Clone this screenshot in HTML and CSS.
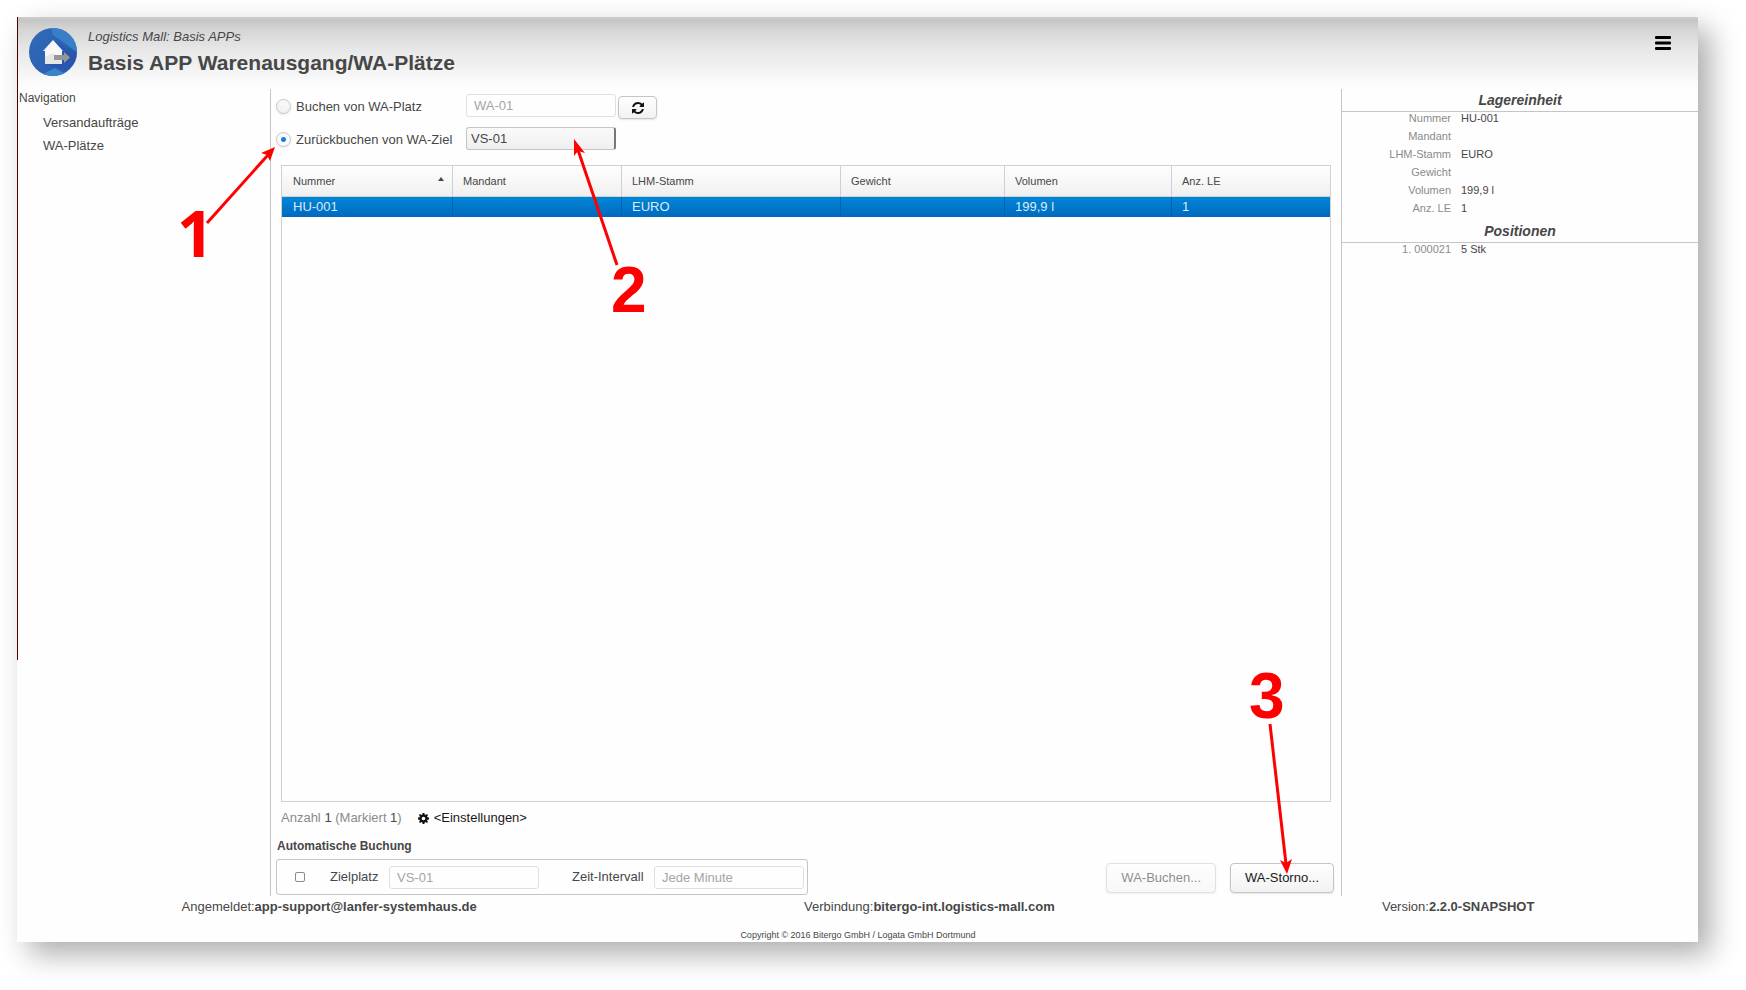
FILE: index.html
```html
<!DOCTYPE html>
<html lang="de">
<head>
<meta charset="utf-8">
<title>Basis APP Warenausgang/WA-Plätze</title>
<link rel="stylesheet" href="styles.css">
</head>
<body>
<div class="window">
  <header class="header">
    <svg class="logo" viewBox="0 0 48 48" aria-hidden="true">
      <defs>
        <clipPath id="disc"><circle cx="24" cy="24" r="24"/></clipPath>
        <linearGradient id="sky" x1="0" y1="0" x2="1" y2="1"><stop offset="0" stop-color="#2f6cb8"/><stop offset="1" stop-color="#2a58b0"/></linearGradient>
      </defs>
      <g clip-path="url(#disc)">
        <rect width="48" height="48" fill="url(#sky)"/>
        <path d="M22 0H48V24L24 7Z" fill="#397fc8"/>
        <path d="M24 12L48 26V34L36 42L16 36Z" fill="#264fa8" opacity=".5"/>
        <path d="M10 48L26 40L40 48Z" fill="#3a82ca"/>
      </g>
      <path d="M24 12L34 23H33V36H16V23H14Z" fill="#f8f8f8"/>
      <path d="M16 29L24 25L33 33V36H16Z" fill="#e6e6e6"/>
      <path d="M25 27H35V24L41 29.500L35 35V32H25Z" fill="#969696"/>
    </svg>
    <div class="titles">
      <p class="suite">Logistics Mall: Basis APPs</p>
      <h1 class="title">Basis APP Warenausgang/WA-Plätze</h1>
    </div>
    <button class="menu" type="button" aria-label="Menü">
      <svg viewBox="0 0 16 14" width="16" height="14"><g fill="#000"><rect width="16" height="3" rx="1"/><rect y="5.500" width="16" height="3" rx="1"/><rect y="11" width="16" height="3" rx="1"/></g></svg>
    </button>
  </header>

  <div class="body">
    <nav class="nav">
      <h2 class="nav-title">Navigation</h2>
      <a class="nav-link" href="#auftraege">Versandaufträge</a>
      <a class="nav-link" href="#plaetze">WA-Plätze</a>
    </nav>

    <main class="main">
      <div class="modes">
        <div class="mode">
          <input class="radio" type="radio" name="mode" id="from-place">
          <label class="mode-label" for="from-place">Buchen von WA-Platz</label>
          <input class="field" type="text" value="WA-01" aria-label="WA-Platz" disabled>
          <button class="button refresh" type="button" aria-label="Aktualisieren">
            <svg viewBox="0 0 1536 1536" width="12" height="12"><path fill="#111" d="M1511 928q0 5-1 7-64 268-268 434.500T764 1536q-146 0-282.500-55T238 1324l-129 129q-19 19-45 19t-45-19-19-45V960q0-26 19-45t45-19h448q26 0 45 19t19 45-19 45l-137 137q71 66 161 102t187 36q134 0 250-65t186-179q11-17 53-117 8-23 30-23h192q13 0 22.500 9.500t9.500 22.500zm25-800v448q0 26-19 45t-45 19h-448q-26 0-45-19t-19-45 19-45l138-138Q969 256 768 256q-134 0-250 65T332 500q-11 17-53 117-8 23-30 23H50q-13 0-22.500-9.500T18 608v-7q65-268 270-434.500T768 0q146 0 284 55.500T1297 212l130-129q19-19 45-19t45 19 19 45z"/></svg>
          </button>
        </div>
        <div class="mode">
          <input class="radio" type="radio" name="mode" id="to-target" checked>
          <label class="mode-label" for="to-target">Zurückbuchen von WA-Ziel</label>
          <select class="select" aria-label="WA-Ziel"><option>VS-01</option></select>
        </div>
      </div>

      <div class="grid">
        <table class="table">
          <colgroup><col class="c1"><col class="c2"><col class="c3"><col class="c4"><col class="c5"><col class="c6"></colgroup>
          <thead>
            <tr><th><span class="sorted">Nummer <i class="caret"></i></span></th><th>Mandant</th><th>LHM-Stamm</th><th>Gewicht</th><th>Volumen</th><th>Anz. LE</th></tr>
          </thead>
          <tbody>
            <tr><td>HU-001</td><td></td><td>EURO</td><td></td><td>199,9 l</td><td>1</td></tr>
          </tbody>
        </table>
      </div>

      <div class="summary">
        <span class="count">Anzahl <b>1</b> (Markiert <b>1</b>)</span>
        <button class="settings" type="button">
          <svg viewBox="0 0 12 12" width="11" height="11"><path fill="#111" fill-rule="evenodd" d="M5 0H7L7.300 1.700L8.300 2.100L9.700 1.100L10.900 2.300L9.900 3.700L10.300 4.700L12 5V7L10.300 7.300L9.900 8.300L10.900 9.700L9.700 10.900L8.300 9.900L7.300 10.300L7 12H5L4.700 10.300L3.700 9.900L2.300 10.900L1.100 9.700L2.100 8.300L1.700 7.300L0 7V5L1.700 4.700L2.100 3.700L1.100 2.300L2.300 1.100L3.700 2.100L4.700 1.700ZM6 4A2 2 0 1 0 6 8A2 2 0 1 0 6 4Z"/></svg>
          &lt;Einstellungen&gt;
        </button>
      </div>

      <div class="actions">
        <section class="auto">
          <h2 class="auto-title">Automatische Buchung</h2>
          <div class="auto-box">
            <input class="check" type="checkbox" aria-label="Automatische Buchung">
            <label class="auto-label" for="ziel">Zielplatz</label>
            <input class="field" id="ziel" type="text" value="VS-01" disabled>
            <label class="auto-label interval" for="intervall">Zeit-Intervall</label>
            <input class="field" id="intervall" type="text" value="Jede Minute" disabled>
          </div>
        </section>
        <div class="buttons">
          <button class="button action" type="button" disabled>WA-Buchen...</button>
          <button class="button action" type="button">WA-Storno...</button>
        </div>
      </div>
    </main>

    <aside class="details">
      <h2 class="details-title">Lagereinheit</h2>
      <dl class="facts">
        <dt>Nummer</dt><dd>HU-001</dd>
        <dt>Mandant</dt><dd></dd>
        <dt>LHM-Stamm</dt><dd>EURO</dd>
        <dt>Gewicht</dt><dd></dd>
        <dt>Volumen</dt><dd>199,9 l</dd>
        <dt>Anz. LE</dt><dd>1</dd>
      </dl>
      <h2 class="details-title">Positionen</h2>
      <dl class="facts">
        <dt>1. 000021</dt><dd>5 Stk</dd>
      </dl>
    </aside>
  </div>

  <footer class="footer">
    <div class="status">
      <span>Angemeldet:<b>app-support@lanfer-systemhaus.de</b></span>
      <span>Verbindung:<b>bitergo-int.logistics-mall.com</b></span>
      <span>Version:<b>2.2.0-SNAPSHOT</b></span>
    </div>
    <p class="copyright">Copyright © 2016 Bitergo GmbH / Logata GmbH Dortmund</p>
  </footer>
</div>

<svg class="callouts" width="1746" height="990" viewBox="0 0 1746 990">
  <g stroke="#f00" stroke-width="3" fill="none">
    <path d="M207 223L268 155"/>
    <path d="M617 265L578 150"/>
    <path d="M1270 724L1286 864"/>
  </g>
  <g fill="#f00">
    <path d="M275 147L270 161L267 155L261 153Z"/>
    <path d="M574 139L585 153L578 151L574 156Z"/>
    <path d="M1287 874L1280 860L1286 863L1292 859Z"/>
    <text class="one" x="177" y="257">1</text>
    <text x="611" y="312">2</text>
    <text x="1249" y="718">3</text>
  </g>
</svg>
</body>
</html>
```
FILE: styles.css
```css
* { box-sizing: border-box; }

body {
  margin: 0;
  min-height: 100vh;
  padding: 17px 48px 48px 17px;
  display: flex;
  position: relative;
  background: #fff;
  color: #474747;
  font: 13px/20px "Liberation Sans", Arial, sans-serif;
}

h1, h2, p, dl, dd { margin: 0; }
button, input, select { font: inherit; color: inherit; margin: 0; }

.window {
  flex: 1;
  min-width: 0;
  display: flex;
  flex-direction: column;
  background: linear-gradient(#4a0000, #4a0000) 0 0 / 1px 643px no-repeat, #fefefe;
  padding-left: 1px;
  box-shadow: 12px 12px 28px rgba(0, 0, 0, .33);
}

.header {
  height: 72px;
  display: flex;
  padding: 11px 27px 0 11px;
  background: linear-gradient(#cecece, #c5c5c5 3px, #d4d4d4 12px, #e7e7e7 32px, #fefefe);
}
.logo { width: 48px; height: 48px; }
.titles { flex: 1; padding-left: 11px; }
.suite { font-style: italic; line-height: 18px; }
.title { font-size: 21px; line-height: 34px; }
.menu { align-self: flex-start; margin-top: 8px; padding: 0; border: 0; background: none; line-height: 0; }

.body { flex: 1; display: flex; }

.nav { width: 252px; display: flex; flex-direction: column; align-items: flex-start; }
.nav-title { padding-left: 1px; font-size: 12px; font-weight: 400; line-height: 18px; margin-bottom: 4px; }
.nav-link { margin-left: 25px; color: inherit; text-decoration: none; line-height: 23px; }

.main {
  flex: 1;
  min-width: 0;
  display: flex;
  flex-direction: column;
  border: 1px solid #c5c5c5;
  border-width: 0 1px;
  padding: 5px 7px 1px 5px;
}
.modes { display: grid; gap: 8px; }
.mode { display: flex; align-items: flex-start; }

.radio {
  appearance: none;
  width: 15px;
  height: 15px;
  margin-top: 5px;
  border: 1px solid #c5c5c5;
  border-radius: 50%;
  background: linear-gradient(#fafafa, #f0f0f0);
  box-shadow: 0 1px 2px rgba(0, 0, 0, .08);
}
.radio:checked { background: radial-gradient(circle, #197de1 2px, #fafafa 3px); }
.mode-label { width: 175px; padding-left: 5px; line-height: 25px; }

.field {
  width: 150px;
  height: 23px;
  padding: 0 7px;
  border: 1px solid #e0e0e0;
  border-radius: 3px;
  background: #fefefe;
  color: #a5a5a5;
}
.select {
  appearance: none;
  width: 150px;
  height: 23px;
  padding: 0 4px;
  border: 1px solid #c5c5c5;
  border-right: 2px solid #777;
  border-radius: 3px;
  background: linear-gradient(#fafafa, #efefef);
}
.button {
  border: 1px solid #c5c5c5;
  border-radius: 4px;
  background: linear-gradient(#fefefe, #f2f2f2);
  box-shadow: 0 1px 2px rgba(0, 0, 0, .1);
  color: #191919;
}
.button:disabled { opacity: .5; }
.refresh {
  width: 39px;
  height: 23px;
  margin: 2px 0 0 2px;
  padding: 0;
  display: flex;
  align-items: center;
  justify-content: center;
}

.grid { flex: 1; margin: 13px 3px 0 5px; border: 1px solid #d0d0d0; }
.table { width: 100%; table-layout: fixed; border-collapse: separate; border-spacing: 0; text-align: left; }
.c1 { width: 171px; }
.c2 { width: 169px; }
.c3 { width: 219px; }
.c4 { width: 164px; }
.c5 { width: 167px; }
.table th {
  height: 31px;
  padding: 0 10px;
  border: 1px solid #d0d0d0;
  border-width: 0 1px 1px 0;
  background: linear-gradient(#fefefe, #f0f0f0);
  font-size: 11px;
  font-weight: 400;
}
.table td {
  height: 20px;
  padding: 0 10px;
  border-right: 1px solid #0062ad;
  background: linear-gradient(#0086d8, #0069be);
  color: #d9ebf7;
  line-height: 20px;
}
.table th:last-child, .table td:last-child { border-right: 0; }
.table th:first-child, .table td:first-child { padding-left: 11px; }
.table th:first-child { padding-right: 8px; }
.sorted { display: flex; align-items: center; justify-content: space-between; }
.caret { margin-bottom: 5px; border: 3px solid transparent; border-top: 0; border-bottom: 4px solid #474747; }

.summary { display: flex; gap: 16px; padding: 6px 5px; }
.count { color: #8b8b8b; }
.count b { color: #474747; font-weight: 400; }
.settings { display: flex; align-items: center; gap: 5px; padding: 0; border: 0; background: none; color: #191919; }

.actions { display: flex; justify-content: space-between; align-items: flex-end; }
.auto-title { font-size: 12px; line-height: 20px; margin: 2px 1px 3px; }
.auto-box {
  height: 36px;
  display: flex;
  align-items: center;
  padding: 0 3px 0 18px;
  border: 1px solid #c5c5c5;
  border-radius: 3px;
}
.check {
  appearance: none;
  width: 10px;
  height: 10px;
  margin-right: 25px;
  border: 1px solid #8b8b8b;
  border-radius: 2px;
}
.auto-label { width: 59px; }
.interval { width: 82px; margin-left: 33px; }
.buttons { display: flex; gap: 14px; margin-bottom: 2px; }
.action { height: 30px; padding: 0 14px; }

.details { width: 356px; }
.details-title {
  border-bottom: 1px solid #c5c5c5;
  font-size: 14px;
  font-style: italic;
  line-height: 22px;
  text-align: center;
}
.facts { display: grid; grid-template-columns: 109px 1fr; column-gap: 10px; grid-auto-rows: 18px; font-size: 11px; line-height: 12px; }
.facts dt { color: #8b8b8b; text-align: right; }

.footer { height: 46px; }
.status { display: flex; justify-content: space-around; line-height: 22px; }
.copyright { margin-top: 8px; font-size: 9px; line-height: 18px; text-align: center; }

.callouts { position: absolute; left: 0; top: 0; pointer-events: none; font: bold 64px "Liberation Sans", Arial, sans-serif; }
.one { font-family: "Noto Sans", sans-serif; }
```
